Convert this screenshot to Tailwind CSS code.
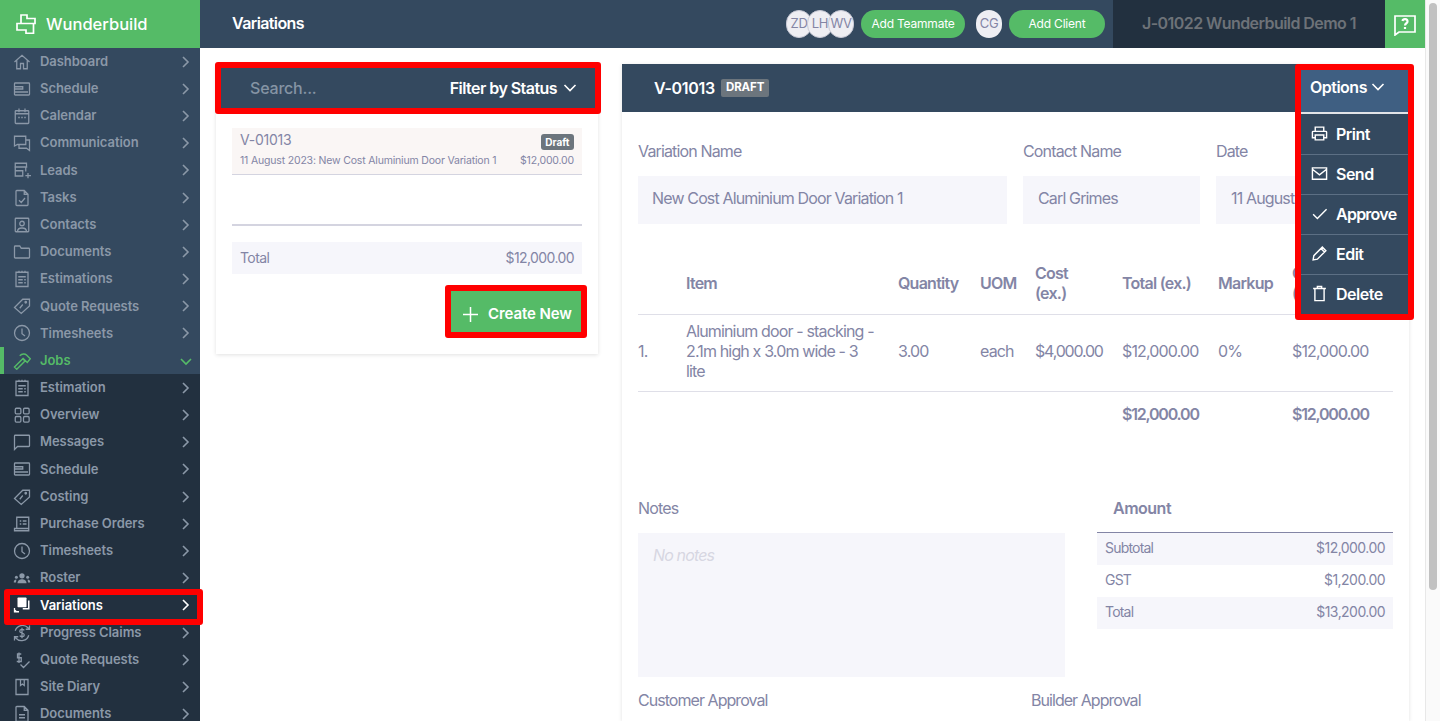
<!DOCTYPE html>
<html lang="en">
<head>
  <meta charset="UTF-8">
  <title>Variations - Wunderbuild</title>
  <script src="https://cdn.jsdelivr.net/npm/@tailwindcss/browser@4"></script>
</head>
<body class="h-screen overflow-hidden flex bg-white font-['Inter',sans-serif] text-[#8385a5]">

  <!-- sidebar -->
  <aside class="w-[200px] shrink-0 h-screen relative z-20 bg-[#22303f]">
    <div class="h-12 bg-[#55bb67] flex items-center pl-4 gap-[10px] text-white">
      <svg class="w-[20px] h-[20px]" viewBox="0 0 20 20" fill="none" stroke="currentColor" stroke-width="1.7"><path d="M5 9.500V1h6v3.500h8v5H1V16h9v3.300h7.500V9.500"/></svg>
      <span class="text-[16.500px] font-medium tracking-[0px]">Wunderbuild</span>
    </div>
    <nav class="text-[13px] font-semibold text-[#8b98a8] tracking-[-0.05px]">
      <div class="bg-[#34495f]">
        <a class="flex items-center h-[27.19px] pl-[13px] pr-[8px] gap-[9px]"><svg class="size-[18px]" viewBox="0 0 24 24" fill="none" stroke="currentColor" stroke-width="1.7"><path d="M2 12l10-9 10 9M5 10v11h5v-7h4v7h5V10"/></svg><span class="flex-1">Dashboard</span><svg class="size-[14px]" viewBox="0 0 14 14" fill="none" stroke="currentColor" stroke-width="1.6"><path d="M5 2l5 5-5 5"/></svg></a>
        <a class="flex items-center h-[27.19px] pl-[13px] pr-[8px] gap-[9px]"><svg class="size-[18px]" viewBox="0 0 24 24" fill="none" stroke="currentColor" stroke-width="1.7"><path d="M3 4h18a1 1 0 0 1 1 1v14a1 1 0 0 1-1 1H3a1 1 0 0 1-1-1V5a1 1 0 0 1 1-1zM2 9h11v3H2M2 16h18"/></svg><span class="flex-1">Schedule</span><svg class="size-[14px]" viewBox="0 0 14 14" fill="none" stroke="currentColor" stroke-width="1.6"><path d="M5 2l5 5-5 5"/></svg></a>
        <a class="flex items-center h-[27.19px] pl-[13px] pr-[8px] gap-[9px]"><svg class="size-[18px]" viewBox="0 0 24 24" fill="none" stroke="currentColor" stroke-width="1.7"><path d="M4 5h16a1 1 0 0 1 1 1v15a1 1 0 0 1-1 1H4a1 1 0 0 1-1-1V6a1 1 0 0 1 1-1zM3 9h18M8 2v5M16 2v5M7 14h2M11 14h2M15 14h2"/></svg><span class="flex-1">Calendar</span><svg class="size-[14px]" viewBox="0 0 14 14" fill="none" stroke="currentColor" stroke-width="1.6"><path d="M5 2l5 5-5 5"/></svg></a>
        <a class="flex items-center h-[27.19px] pl-[13px] pr-[8px] gap-[9px]"><svg class="size-[18px]" viewBox="0 0 24 24" fill="none" stroke="currentColor" stroke-width="1.7"><path d="M2 3h15v11H6l-4 2zM17 8h5v14l-4-3H8v-5"/></svg><span class="flex-1">Communication</span><svg class="size-[14px]" viewBox="0 0 14 14" fill="none" stroke="currentColor" stroke-width="1.6"><path d="M5 2l5 5-5 5"/></svg></a>
        <a class="flex items-center h-[27.19px] pl-[13px] pr-[8px] gap-[9px]"><svg class="size-[18px]" viewBox="0 0 24 24" fill="none" stroke="currentColor" stroke-width="1.7"><path d="M3 3h15v5H3zM2 8h17M3 8v12h10v-7H3M17 8v6M20 16v7M16.500 19.500H24"/></svg><span class="flex-1">Leads</span><svg class="size-[14px]" viewBox="0 0 14 14" fill="none" stroke="currentColor" stroke-width="1.6"><path d="M5 2l5 5-5 5"/></svg></a>
        <a class="flex items-center h-[27.19px] pl-[13px] pr-[8px] gap-[9px]"><svg class="size-[18px]" viewBox="0 0 24 24" fill="none" stroke="currentColor" stroke-width="1.7"><path d="M5 2h10l5 5v14a1 1 0 0 1-1 1H5a1 1 0 0 1-1-1V3a1 1 0 0 1 1-1zM15 2v5h5M8 15l3 3 5-6"/></svg><span class="flex-1">Tasks</span><svg class="size-[14px]" viewBox="0 0 14 14" fill="none" stroke="currentColor" stroke-width="1.6"><path d="M5 2l5 5-5 5"/></svg></a>
        <a class="flex items-center h-[27.19px] pl-[13px] pr-[8px] gap-[9px]"><svg class="size-[18px]" viewBox="0 0 24 24" fill="none" stroke="currentColor" stroke-width="1.7"><path d="M4 3h16a1 1 0 0 1 1 1v16a1 1 0 0 1-1 1H4a1 1 0 0 1-1-1V4a1 1 0 0 1 1-1zM12 7a3 3 0 1 1 0 6 3 3 0 0 1 0-6zM6 21c0-4 3-5 6-5s6 1 6 5"/></svg><span class="flex-1">Contacts</span><svg class="size-[14px]" viewBox="0 0 14 14" fill="none" stroke="currentColor" stroke-width="1.6"><path d="M5 2l5 5-5 5"/></svg></a>
        <a class="flex items-center h-[27.19px] pl-[13px] pr-[8px] gap-[9px]"><svg class="size-[18px]" viewBox="0 0 24 24" fill="none" stroke="currentColor" stroke-width="1.7"><path d="M2 5a1 1 0 0 1 1-1h6l2 3h10a1 1 0 0 1 1 1v11a1 1 0 0 1-1 1H3a1 1 0 0 1-1-1z"/></svg><span class="flex-1">Documents</span><svg class="size-[14px]" viewBox="0 0 14 14" fill="none" stroke="currentColor" stroke-width="1.6"><path d="M5 2l5 5-5 5"/></svg></a>
        <a class="flex items-center h-[27.19px] pl-[13px] pr-[8px] gap-[9px]"><svg class="size-[18px]" viewBox="0 0 24 24" fill="none" stroke="currentColor" stroke-width="1.7"><path d="M4 3h16v19H4zM4 2v2M8 1v3M12 1v3M16 1v3M20 2v2M7 9h10M7 13h6M15 13h2M7 17h6M15 17h2"/></svg><span class="flex-1">Estimations</span><svg class="size-[14px]" viewBox="0 0 14 14" fill="none" stroke="currentColor" stroke-width="1.6"><path d="M5 2l5 5-5 5"/></svg></a>
        <a class="flex items-center h-[27.19px] pl-[13px] pr-[8px] gap-[9px]"><svg class="size-[18px]" viewBox="0 0 24 24" fill="none" stroke="currentColor" stroke-width="1.7"><path d="M13 3h9v9L11 22l-9-8zM17 6a1 1 0 1 1 0 2 1 1 0 0 1 0-2zM9 15l4-5"/></svg><span class="flex-1">Quote Requests</span><svg class="size-[14px]" viewBox="0 0 14 14" fill="none" stroke="currentColor" stroke-width="1.6"><path d="M5 2l5 5-5 5"/></svg></a>
        <a class="flex items-center h-[27.19px] pl-[13px] pr-[8px] gap-[9px]"><svg class="size-[18px]" viewBox="0 0 24 24" fill="none" stroke="currentColor" stroke-width="1.7"><circle cx="12" cy="12" r="10"/><path d="M12 6v7l4 3"/></svg><span class="flex-1">Timesheets</span><svg class="size-[14px]" viewBox="0 0 14 14" fill="none" stroke="currentColor" stroke-width="1.6"><path d="M5 2l5 5-5 5"/></svg></a>
        <a class="flex items-center h-[27.19px] pl-[13px] pr-[7px] gap-[9px] text-[#55bb67] border-l-4 border-[#55bb67]"><svg class="size-[18px] -ml-[4px]" viewBox="0 0 24 24" fill="none" stroke="currentColor" stroke-width="1.9"><path d="M2 20l11-11 3 3L5 23zM9 5c3-3 7-3 9-1l5 5-4 5-6-6"/></svg><span class="flex-1">Jobs</span><svg class="size-[14px]" viewBox="0 0 14 14" fill="none" stroke="currentColor" stroke-width="1.6"><path d="M2 5l5 5 5-5"/></svg></a>
      </div>
      <a class="flex items-center h-[27.19px] pl-[13px] pr-[8px] gap-[9px]"><svg class="size-[18px]" viewBox="0 0 24 24" fill="none" stroke="currentColor" stroke-width="1.7"><path d="M4 3h16v19H4zM4 2v2M8 1v3M12 1v3M16 1v3M20 2v2M7 9h10M7 13h6M15 13h2M7 17h6M15 17h2"/></svg><span class="flex-1">Estimation</span><svg class="size-[14px]" viewBox="0 0 14 14" fill="none" stroke="currentColor" stroke-width="1.6"><path d="M5 2l5 5-5 5"/></svg></a>
      <a class="flex items-center h-[27.19px] pl-[13px] pr-[8px] gap-[9px]"><svg class="size-[18px]" viewBox="0 0 24 24" fill="none" stroke="currentColor" stroke-width="1.7"><rect x="3" y="3" width="7.500" height="7.500" rx="1.500"/><rect x="14" y="3" width="7.500" height="7.500" rx="1.500"/><rect x="3" y="14" width="7.500" height="7.500" rx="1.500"/><rect x="14" y="14" width="7.500" height="7.500" rx="1.500"/></svg><span class="flex-1">Overview</span><svg class="size-[14px]" viewBox="0 0 14 14" fill="none" stroke="currentColor" stroke-width="1.6"><path d="M5 2l5 5-5 5"/></svg></a>
      <a class="flex items-center h-[27.19px] pl-[13px] pr-[8px] gap-[9px]"><svg class="size-[18px]" viewBox="0 0 24 24" fill="none" stroke="currentColor" stroke-width="1.7"><path d="M3 3h18a1 1 0 0 1 1 1v13a1 1 0 0 1-1 1H6l-4 4V4a1 1 0 0 1 1-1z"/></svg><span class="flex-1">Messages</span><svg class="size-[14px]" viewBox="0 0 14 14" fill="none" stroke="currentColor" stroke-width="1.6"><path d="M5 2l5 5-5 5"/></svg></a>
      <a class="flex items-center h-[27.19px] pl-[13px] pr-[8px] gap-[9px]"><svg class="size-[18px]" viewBox="0 0 24 24" fill="none" stroke="currentColor" stroke-width="1.7"><path d="M3 4h18a1 1 0 0 1 1 1v14a1 1 0 0 1-1 1H3a1 1 0 0 1-1-1V5a1 1 0 0 1 1-1zM2 9h11v3H2M2 16h18"/></svg><span class="flex-1">Schedule</span><svg class="size-[14px]" viewBox="0 0 14 14" fill="none" stroke="currentColor" stroke-width="1.6"><path d="M5 2l5 5-5 5"/></svg></a>
      <a class="flex items-center h-[27.19px] pl-[13px] pr-[8px] gap-[9px]"><svg class="size-[18px]" viewBox="0 0 24 24" fill="none" stroke="currentColor" stroke-width="1.7"><path d="M13 3h9v9L11 22l-9-8zM17 6a1 1 0 1 1 0 2 1 1 0 0 1 0-2zM9 15l4-5"/></svg><span class="flex-1">Costing</span><svg class="size-[14px]" viewBox="0 0 14 14" fill="none" stroke="currentColor" stroke-width="1.6"><path d="M5 2l5 5-5 5"/></svg></a>
      <a class="flex items-center h-[27.19px] pl-[13px] pr-[8px] gap-[9px]"><svg class="size-[18px]" viewBox="0 0 24 24" fill="none" stroke="currentColor" stroke-width="1.7"><path d="M5 3h16v15H5zM2 18h19v3H2zM9 8h2M13 8h5M9 12h2M13 12h5"/></svg><span class="flex-1">Purchase Orders</span><svg class="size-[14px]" viewBox="0 0 14 14" fill="none" stroke="currentColor" stroke-width="1.6"><path d="M5 2l5 5-5 5"/></svg></a>
      <a class="flex items-center h-[27.19px] pl-[13px] pr-[8px] gap-[9px]"><svg class="size-[18px]" viewBox="0 0 24 24" fill="none" stroke="currentColor" stroke-width="1.7"><circle cx="12" cy="12" r="10"/><path d="M12 6v7l4 3"/></svg><span class="flex-1">Timesheets</span><svg class="size-[14px]" viewBox="0 0 14 14" fill="none" stroke="currentColor" stroke-width="1.6"><path d="M5 2l5 5-5 5"/></svg></a>
      <a class="flex items-center h-[27.19px] pl-[13px] pr-[8px] gap-[9px]"><svg class="size-[18px]" viewBox="0 0 24 24" fill="currentColor"><circle cx="12" cy="9" r="3.500"/><path d="M6 19c0-4 3-5.500 6-5.500s6 1.500 6 5.500z"/><circle cx="4.500" cy="11" r="2"/><circle cx="19.500" cy="11" r="2"/><path d="M1 18c0-3 1.500-4 3.500-4l-.5 4zM23 18c0-3-1.500-4-3.500-4l.5 4z"/></svg><span class="flex-1">Roster</span><svg class="size-[14px]" viewBox="0 0 14 14" fill="none" stroke="currentColor" stroke-width="1.6"><path d="M5 2l5 5-5 5"/></svg></a>
      <a class="relative flex items-center h-[27.19px] pl-[13px] pr-[8px] gap-[9px] text-white"><svg class="size-[18px]" viewBox="0 0 24 24" fill="currentColor"><path d="M7 2h10a1 1 0 0 1 1 1v11a1 1 0 0 1-1 1H7a1 1 0 0 1-1-1V3a1 1 0 0 1 1-1z"/><path d="M19 6h3v12h-9v-2h7V6z"/><path d="M2 16v5h6M4 19l-2 2" fill="none" stroke="currentColor" stroke-width="1.7"/></svg><span class="flex-1">Variations</span><svg class="size-[14px]" viewBox="0 0 14 14" fill="none" stroke="currentColor" stroke-width="1.6"><path d="M5 2l5 5-5 5"/></svg>
        <span class="absolute left-[4px] -right-[3px] -top-[3px] -bottom-[6px] border-[6px] border-[#ff0000] rounded-[3px]"></span></a>
      <a class="flex items-center h-[27.19px] pl-[13px] pr-[8px] gap-[9px]"><svg class="size-[18px]" viewBox="0 0 24 24" fill="none" stroke="currentColor" stroke-width="1.7"><path d="M3 9a10 10 0 0 1 17-4l2 2M21 15a10 10 0 0 1-17 4l-2-2M22 2v5h-5M2 22v-5h5M15 8.500c-1-1.500-6-2-6 1 0 3 6 2 6 5 0 3-5 2.500-6 1M12 5v14"/></svg><span class="flex-1">Progress Claims</span><svg class="size-[14px]" viewBox="0 0 14 14" fill="none" stroke="currentColor" stroke-width="1.6"><path d="M5 2l5 5-5 5"/></svg></a>
      <a class="flex items-center h-[27.19px] pl-[13px] pr-[8px] gap-[9px]"><svg class="size-[18px]" viewBox="0 0 24 24" fill="none" stroke="currentColor" stroke-width="1.7"><path d="M11 4H6v5h5v5H5M8 2v14M10 18l4 4 8-8"/></svg><span class="flex-1">Quote Requests</span><svg class="size-[14px]" viewBox="0 0 14 14" fill="none" stroke="currentColor" stroke-width="1.6"><path d="M5 2l5 5-5 5"/></svg></a>
      <a class="flex items-center h-[27.19px] pl-[13px] pr-[8px] gap-[9px]"><svg class="size-[18px]" viewBox="0 0 24 24" fill="none" stroke="currentColor" stroke-width="1.7"><path d="M4 2h16v20H4zM10 2v8l2.500-2 2.500 2V2"/></svg><span class="flex-1">Site Diary</span><svg class="size-[14px]" viewBox="0 0 14 14" fill="none" stroke="currentColor" stroke-width="1.6"><path d="M5 2l5 5-5 5"/></svg></a>
      <a class="flex items-center h-[27.19px] pl-[13px] pr-[8px] gap-[9px]"><svg class="size-[18px]" viewBox="0 0 24 24" fill="none" stroke="currentColor" stroke-width="1.7"><path d="M5 2h10l5 5v15H4V3a1 1 0 0 1 1-1zM15 2v5h5M8 13h8M8 17h8"/></svg><span class="flex-1">Documents</span><svg class="size-[14px]" viewBox="0 0 14 14" fill="none" stroke="currentColor" stroke-width="1.6"><path d="M5 2l5 5-5 5"/></svg></a>
    </nav>
  </aside>

  <div class="flex-1 min-w-0 flex flex-col h-screen">
    <!-- top bar -->
    <header class="h-12 shrink-0 flex items-center bg-[#34495f] pl-8">
      <h1 class="text-white text-[16px] font-semibold tracking-[-0.6px] flex-1 pb-[2px]">Variations</h1>
      <div class="flex items-center">
        <span class="w-[26px] h-[28px] rounded-full bg-[#eeeef3] border border-[#c9cad6] text-[13px] tracking-[-0.3px] flex items-center justify-center">ZD</span>
        <span class="w-[26px] h-[28px] rounded-full bg-[#eeeef3] border border-[#c9cad6] text-[13px] tracking-[-0.3px] flex items-center justify-center -ml-[5px]">LH</span>
        <span class="w-[26px] h-[28px] rounded-full bg-[#eeeef3] border border-[#c9cad6] text-[13px] tracking-[-0.3px] flex items-center justify-center -ml-[5px]">WV</span>
        <span class="ml-[7px] w-[104px] h-[28px] rounded-full bg-[#55bb67] text-white text-[12px] tracking-[-0.2px] flex items-center justify-center">Add Teammate</span>
        <span class="ml-[11px] w-[26px] h-[28px] rounded-full bg-[#eeeef3] text-[13px] tracking-[-0.3px] flex items-center justify-center">CG</span>
        <span class="ml-[7px] w-[96px] h-[28px] rounded-full bg-[#55bb67] text-white text-[12px] tracking-[-0.2px] flex items-center justify-center">Add Client</span>
      </div>
      <div class="ml-2 w-[272px] h-12 bg-[#22303f] flex items-center pl-[29px] pb-[2px] text-[#6d7278] text-[16px] font-semibold tracking-[-0.57px]">J-01022 Wunderbuild Demo 1</div>
      <div class="w-10 h-12 bg-[#55bb67] flex items-center justify-center text-white">
        <svg class="size-[24px]" viewBox="0 0 24 24" fill="none" stroke="currentColor" stroke-width="1.700"><path d="M2 4h20v16H6l-4 3z"/><path d="M9.500 9c.5-2.500 5-2.500 5 .5 0 2-2.500 1.500-2.500 4M12 15v2" stroke-width="2.200"/></svg>
      </div>
      <div class="w-[15px] h-12 bg-white"></div>
    </header>

    <div class="flex-1 min-h-0 flex">
      <main class="flex-1 min-w-0 flex items-start pl-4 pr-[15px] pt-4 gap-6 relative">
        <!-- variations list -->
        <section class="w-[382px] shrink-0 h-[290px] bg-white shadow-[0_1px_4px_rgba(0,0,0,0.12)] relative">
          <div class="relative ml-[5px] mr-[3px] mt-[4px] h-10 flex items-center justify-between bg-[#34495f] pl-[29px] pr-[18px]">
            <span class="text-[16px] font-medium text-[#8594a4] tracking-[-0.2px]">Search...</span>
            <span class="flex items-center gap-[6px] text-white text-[16px] font-semibold tracking-[-0.55px]">Filter by Status
              <svg class="size-[14px]" viewBox="0 0 14 14" fill="none" stroke="currentColor" stroke-width="1.6"><path d="M1.500 4l5.500 5.500L12.500 4"/></svg></span>
            <span class="absolute -inset-[6px] border-[6px] border-[#ff0000] rounded-[3px]"></span>
          </div>
          <div class="mx-4 mt-5">
            <div class="h-[47px] bg-[#faf6f5] border-b border-[#d4d4e0] px-2">
              <div class="flex justify-between items-center h-[22px]">
                <span class="text-[14px] tracking-[-0.25px]">V-01013</span>
                <span class="h-4 px-[4.500px] mt-[6px] bg-[#6c757d] rounded-[3px] text-white text-[10px] font-bold flex items-center">Draft</span>
              </div>
              <div class="flex justify-between text-[10.500px] leading-[16px] mt-[3px] tracking-[-0.18px]">
                <span>11 August 2023: New Cost Aluminium Door Variation 1</span><span>$12,000.00</span>
              </div>
            </div>
            <div class="h-[51px] border-b-2 border-[#d4d4e0]"></div>
            <div class="mt-4 h-8 bg-[#f6f6fb] flex items-center justify-between px-2 pb-[2px] text-[14px] tracking-[-0.6px]">
              <span>Total</span><span>$12,000.00</span>
            </div>
            <div class="flex justify-end mt-[17px]">
              <button class="relative w-[130px] h-[41px] mr-[1px] bg-[#55bb67] text-white flex items-center pl-[12px] pt-[6px] gap-[10px] text-[15px] font-semibold tracking-[-0.1px]">
                <svg class="size-[15px]" viewBox="0 0 15 15" fill="none" stroke="currentColor" stroke-width="1.500"><path d="M7.500 0v15M0 7.500h15"/></svg>Create New
                <span class="absolute -inset-[6px] border-[6px] border-[#ff0000] rounded-[3px]"></span></button>
            </div>
          </div>
        </section>

        <!-- variation detail -->
        <section class="w-[787px] shrink-0 h-[657px] bg-white shadow-[0_1px_4px_rgba(0,0,0,0.12)] relative">
          <div class="h-12 bg-[#34495f] flex items-center pl-8 gap-[6px]">
            <span class="text-white text-[16px] font-semibold tracking-[-0.3px]">V-01013</span>
            <span class="h-[18px] px-[5px] rounded-[2px] bg-[#6c757d] text-white text-[11.500px] font-bold tracking-[-0.1px] flex items-center">DRAFT</span>
          </div>

          <div class="absolute right-px top-[6px] w-[107px] z-10 bg-[#34495f] text-white text-[16px] font-semibold tracking-[-0.5px]">
            <div class="h-[44px] bg-[#3f5f82] border-b-2 border-[#e2e4e8] flex items-center pl-[9px] pb-[9px] gap-[4px]">Options
              <svg class="size-[14px]" viewBox="0 0 14 14" fill="none" stroke="currentColor" stroke-width="1.6"><path d="M1.500 4l5.500 5.500L12.500 4"/></svg></div>
            <div class="h-10 flex items-center pl-[10px] pb-[1px] gap-[8px]"><svg class="size-[17px]" viewBox="0 0 24 24" fill="none" stroke="currentColor" stroke-width="2"><path d="M6 9V3h12v6M6 18H2V10a1 1 0 0 1 1-1h18a1 1 0 0 1 1 1v8h-4M6 14h12v7H6z"/></svg>Print</div>
            <div class="h-10 flex items-center pl-[10px] pb-[2px] gap-[8px] border-t border-[#5c6f84]"><svg class="size-[17px]" viewBox="0 0 24 24" fill="none" stroke="currentColor" stroke-width="2"><path d="M2 4h20v16H2zM2 6l10 8 10-8"/></svg>Send</div>
            <div class="h-10 flex items-center pl-[10px] pb-[2px] gap-[8px] border-t border-[#5c6f84] tracking-[-0.75px]"><svg class="size-[17px]" viewBox="0 0 24 24" fill="none" stroke="currentColor" stroke-width="2"><path d="M3 13l6 6L22 6"/></svg>Approve</div>
            <div class="h-10 flex items-center pl-[10px] pb-[2px] gap-[8px] border-t border-[#5c6f84]"><svg class="size-[17px]" viewBox="0 0 24 24" fill="none" stroke="currentColor" stroke-width="2"><path d="M3 21l1-6L16 3l5 5L9 20zM14 5l5 5"/></svg>Edit</div>
            <div class="h-10 flex items-center pl-[10px] pb-[2px] gap-[8px] border-t border-[#5c6f84]"><svg class="size-[17px]" viewBox="0 0 24 24" fill="none" stroke="currentColor" stroke-width="2"><path d="M3 5h18M9 5V2h6v3M5.500 5v17h13V5"/></svg>Delete</div>
            <span class="absolute -inset-[6px] border-[6px] border-[#ff0000] rounded-[3px]"></span>
          </div>

          <div class="px-4 text-[16px] tracking-[-0.85px]">
            <div class="grid grid-cols-[369px_177px_177px] gap-x-4 mt-[27px]">
              <div><div class="h-6 leading-6">Variation Name</div><div class="mt-[13px] h-12 bg-[#f6f6fb] pl-[14px] pb-1 flex items-center">New Cost Aluminium Door Variation 1</div></div>
              <div><div class="h-6 leading-6">Contact Name</div><div class="mt-[13px] h-12 bg-[#f6f6fb] pl-[15px] pb-1 flex items-center">Carl Grimes</div></div>
              <div><div class="h-6 leading-6">Date</div><div class="mt-[13px] h-12 bg-[#f6f6fb] pl-[15px] pb-1 flex items-center">11 August 2023</div></div>
            </div>

            <table class="table-fixed w-[755px] mt-[32px] leading-[20px]">
              <colgroup><col class="w-[48px]"><col class="w-[212px]"><col class="w-[82px]"><col class="w-[55px]"><col class="w-[87px]"><col class="w-[96px]"><col class="w-[74px]"><col class="w-[101px]"></colgroup>
              <thead class="text-left tracking-[-0.75px]">
                <tr class="h-[58px] border-b border-[#dfdfe8]"><th class="pb-1"></th><th class="font-semibold pb-1">Item</th><th class="font-semibold pb-1">Quantity</th><th class="font-semibold pb-1">UOM</th><th class="font-semibold pb-1">Cost<br>(ex.)</th><th class="font-semibold pb-1">Total (ex.)</th><th class="font-semibold pb-1">Markup</th><th class="font-semibold pb-1">Cost<br>(inc.)</th></tr>
              </thead>
              <tbody>
                <tr class="h-[77px] border-b border-[#dfdfe8]"><td class="pb-1">1.</td><td class="pr-[20px] pb-1">Aluminium door - stacking - 2.1m high x 3.0m wide - 3 lite</td><td class="pb-1">3.00</td><td class="pb-1">each</td><td class="pb-1 tracking-[-1.2px]">$4,000.00</td><td class="pb-1">$12,000.00</td><td class="pb-1">0%</td><td class="pb-1">$12,000.00</td></tr>
                <tr class="h-[45px] font-semibold tracking-[-1.2px]"><td></td><td></td><td></td><td></td><td></td><td>$12,000.00</td><td></td><td>$12,000.00</td></tr>
              </tbody>
            </table>

            <div class="flex justify-between mt-[60px] w-[755px]">
              <div class="w-[427px]">
                <div class="h-6 leading-6">Notes</div>
                <div class="mt-[13px] h-[144px] bg-[#f6f6fb] pl-[15px] pt-[10px] italic text-[#d7d7e2]">No notes</div>
              </div>
              <div class="w-[296px]">
                <div class="h-6 leading-6 font-semibold pl-[16px] tracking-[-0.5px]">Amount</div>
                <div class="mt-3 border-t border-[#8385a5] text-[14px] tracking-[-0.55px]">
                  <div class="h-8 bg-[#f6f6fb] px-2 pb-1 flex items-center justify-between"><span class="tracking-[-0.8px]">Subtotal</span><span>$12,000.00</span></div>
                  <div class="h-8 px-2 pb-1 flex items-center justify-between"><span class="tracking-[-0.8px]">GST</span><span>$1,200.00</span></div>
                  <div class="h-8 bg-[#f6f6fb] px-2 pb-1 flex items-center justify-between"><span class="tracking-[-0.8px]">Total</span><span>$13,200.00</span></div>
                </div>
              </div>
            </div>

            <div class="grid grid-cols-[393px_1fr] mt-[11px] tracking-[-0.95px]">
              <div class="h-6 leading-6">Customer Approval</div>
              <div class="h-6 leading-6">Builder Approval</div>
            </div>
          </div>
        </section>
      </main>

      <!-- window scrollbar -->
      <div class="absolute right-0 top-0 bottom-0 w-[15px] bg-[#fafafa] border-l border-[#e8e8e8] z-30 px-[3px] pt-[3px]">
        <div class="h-[587px] bg-[#c1c1c1] rounded-full"></div>
      </div>
    </div>
  </div>
</body>
</html>
